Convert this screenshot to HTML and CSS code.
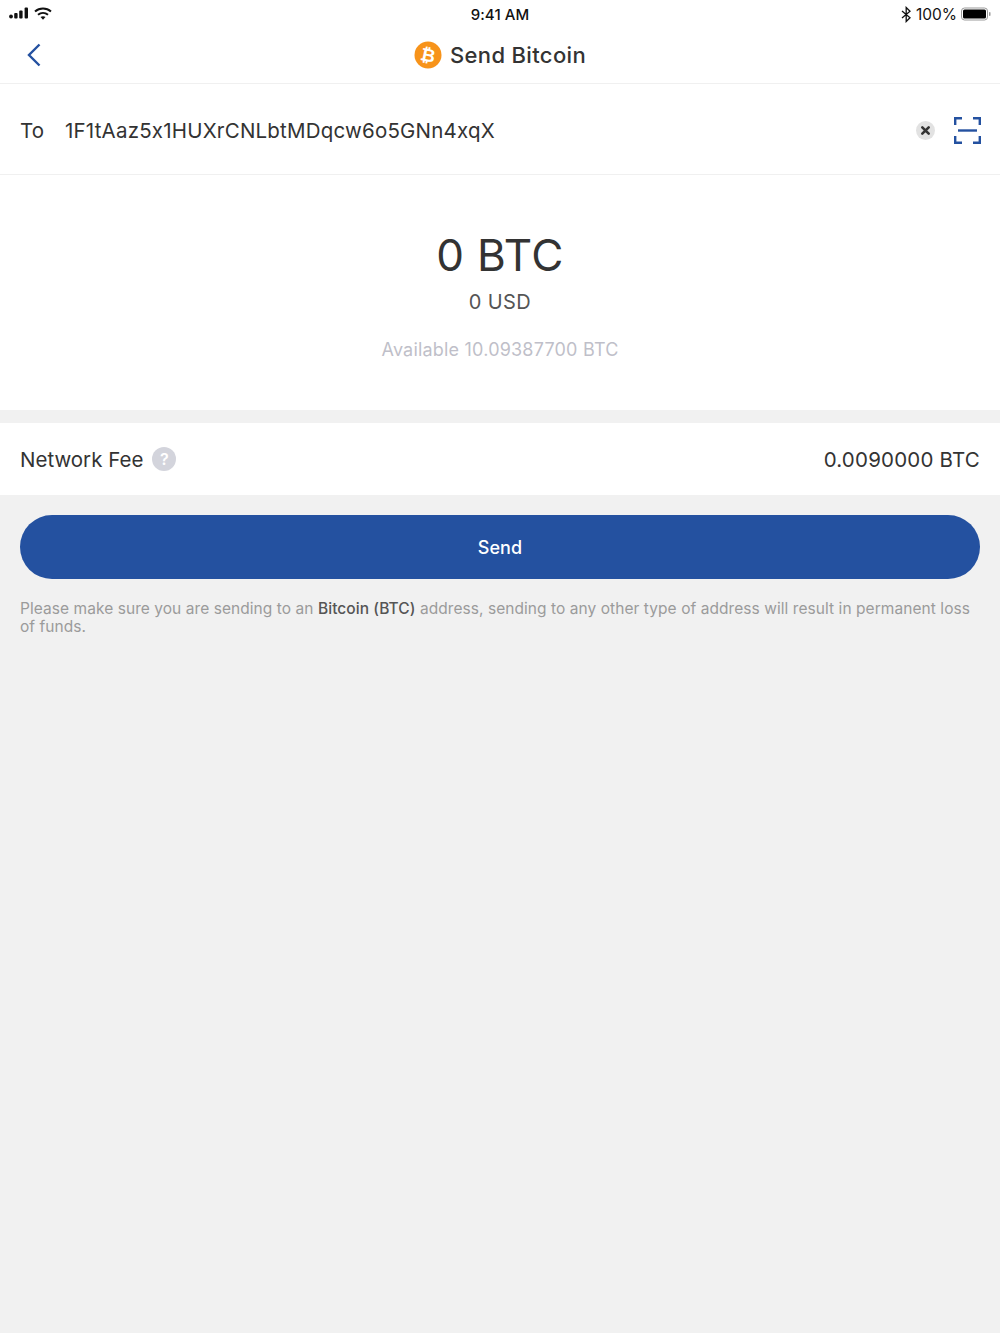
FILE: index.html
```html
<!DOCTYPE html>
<html lang="en">
<head>
  <meta charset="UTF-8">
  <title>Send Bitcoin</title>
  <link rel="stylesheet" href="styles.css">
</head>
<body>

<header class="top">
  <div class="status-bar">
    <div class="status-left">
      <svg width="20" height="12" viewBox="0 0 20 12">
        <circle cx="2" cy="9.5" r="1.9" fill="#111"/>
        <rect x="5.2" y="6" width="3.4" height="5.4" rx="1" fill="#111"/>
        <rect x="10.2" y="3.4" width="3.4" height="8" rx="1" fill="#111"/>
        <rect x="15.6" y="0.4" width="3.4" height="11" rx="1" fill="#111"/>
      </svg>
      <svg width="18" height="13" viewBox="0 0 18 13" fill="none" stroke="#111" stroke-width="2">
        <path d="M1 4.6C5.6.6 12.4.6 17 4.6"/>
        <path d="M4 7.7c2.9-2.3 7.1-2.3 10 0"/>
        <path d="M9 12.8 6.5 10c1.5-1 3.5-1 5 0Z" fill="#111" stroke="none"/>
      </svg>
    </div>
    <div class="status-time">9:41 AM</div>
    <div class="status-right">
      <svg width="11" height="17" viewBox="0 0 11 16" fill="none" stroke="#111" stroke-width="1.3">
        <path d="M1 4.5 9 11.2 5.2 15V1L9 4.8 1 11.5"/>
      </svg>
      <span>100%</span>
      <svg width="30" height="14" viewBox="0 0 30 13">
        <rect x="0.5" y="0.5" width="26" height="12" rx="3" fill="none" stroke="#999"/>
        <rect x="2" y="2" width="23" height="9" rx="1.5" fill="#000"/>
        <rect x="28" y="4.5" width="1.5" height="4" rx="0.7" fill="#999"/>
      </svg>
    </div>
  </div>
  <nav class="nav-bar">
    <svg class="back" width="14" height="24" viewBox="0 0 14 24" fill="none" stroke="#2451a0" stroke-width="2.4">
      <path d="M12.5 1.5 2 12l10.5 10.5"/>
    </svg>
    <svg width="28" height="28" viewBox="0 0 28 28">
      <circle cx="14" cy="14" r="13.5" fill="#f7931a"/>
      <text x="14" y="20.5" font-family="Liberation Sans" font-size="18" font-weight="700" fill="#fff" text-anchor="middle" transform="rotate(12 14 14)">₿</text>
    </svg>
    <h1 class="nav-title">Send Bitcoin</h1>
  </nav>
</header>

<section class="address-row">
  <span class="to-label">To</span>
  <span class="address">1F1tAaz5x1HUXrCNLbtMDqcw6o5GNn4xqX</span>
  <svg class="clear-icon" width="19" height="19" viewBox="0 0 19 19">
    <circle cx="9.5" cy="9.5" r="9.5" fill="#e2e2e2"/>
    <path d="M6.3 6.3l6.4 6.4M12.7 6.3l-6.4 6.4" stroke="#333" stroke-width="2.6" stroke-linecap="round"/>
  </svg>
  <svg width="27" height="27" viewBox="0 0 27 27" fill="none" stroke="#2451a0" stroke-width="2.4">
    <path d="M1.2 8V1.2H8M19 1.2h6.8V8M1.2 19v6.8H8M19 25.8h6.8V19"/>
    <path d="M4 13.5h19"/>
  </svg>
</section>

<section class="amount">
  <div class="amount-btc">0 BTC</div>
  <div class="amount-usd">0 USD</div>
  <div class="amount-available">Available 10.09387700 BTC</div>
</section>

<section class="fee-row">
  <span class="fee-label">Network Fee</span>
  <span class="help">?</span>
  <span class="fee-value">0.0090000 BTC</span>
</section>

<main class="actions">
  <button class="send-button">Send</button>
  <p class="note">Please make sure you are sending to an <strong>Bitcoin (BTC)</strong> address, sending to any other type of address will result in permanent loss of funds.</p>
</main>

</body>
</html>
```

FILE: styles.css
```css
html {
  background: #fff;
}

body {
  margin: 0;
  height: 1333px;
  background: #f1f1f1;
  font-family: Inter, "Liberation Sans", sans-serif;
  font-feature-settings: "calt" 0;
  color: #333;
}

.top {
  background: #fff;
  border-bottom: 1px solid #f0f0f0;
}

.status-bar {
  height: 28px;
  display: grid;
  grid-template-columns: 1fr auto 1fr;
  align-items: center;
  padding: 0 9px;
  color: #111;
}

.status-left {
  display: flex;
  align-items: center;
  gap: 5px;
  margin-top: -2px;
}

.status-time {
  font-size: 15px;
  font-weight: 500;
  letter-spacing: 0.1px;
}

.status-right {
  display: flex;
  align-items: center;
  justify-content: flex-end;
  gap: 4px;
  font-size: 15.5px;
}

.nav-bar {
  height: 55px;
  box-sizing: border-box;
  padding-bottom: 2px;
  position: relative;
  display: flex;
  align-items: center;
  justify-content: center;
  gap: 8px;
}

.back {
  position: absolute;
  left: 27px;
  top: 15px;
}

.nav-title {
  margin: 0;
  font-size: 22px;
  font-weight: 500;
  letter-spacing: 0.35px;
}

.address-row {
  height: 91px;
  box-sizing: border-box;
  padding: 2px 19px 0 20px;
  display: flex;
  align-items: center;
  background: #fff;
  border-bottom: 1px solid #f0f0f0;
  font-size: 20.5px;
  letter-spacing: 0.2px;
}

.to-label {
  width: 45px;
}

.address {
  flex: 1;
}

.clear-icon {
  margin-right: 19px;
}

.amount {
  height: 235px;
  box-sizing: border-box;
  padding-top: 53px;
  background: #fff;
  text-align: center;
}

.amount-btc {
  font-size: 44px;
  line-height: 54px;
  letter-spacing: 0.4px;
}

.amount-usd {
  margin-top: 7px;
  font-size: 20px;
  line-height: 26px;
  letter-spacing: 0.4px;
  color: #555;
}

.amount-available {
  margin-top: 22px;
  font-size: 18px;
  line-height: 26px;
  letter-spacing: 0.2px;
  color: #bfbfc9;
}

.fee-row {
  height: 72px;
  margin-top: 13px;
  display: flex;
  align-items: center;
  padding: 0 20px;
  background: #fff;
  font-size: 20.5px;
}

.help {
  width: 24px;
  height: 24px;
  margin-left: 9px;
  border-radius: 50%;
  background: #d3d4dc;
  color: #fff;
  font-size: 16px;
  font-weight: 600;
  line-height: 24px;
  text-align: center;
}

.fee-value {
  margin-left: auto;
  letter-spacing: 0.2px;
}

.actions {
  padding: 20px 20px 0;
}

.send-button {
  display: block;
  width: 100%;
  height: 64px;
  border: none;
  border-radius: 32px;
  background: #2451a0;
  color: #fff;
  font-family: inherit;
  font-size: 18px;
  font-weight: 500;
  letter-spacing: 0.1px;
}

.note {
  margin: 21px 0 0;
  font-size: 15.5px;
  line-height: 18px;
  letter-spacing: 0.06px;
  color: #9b9b9b;
}

.note strong {
  font-weight: 500;
  color: #555;
}
```
